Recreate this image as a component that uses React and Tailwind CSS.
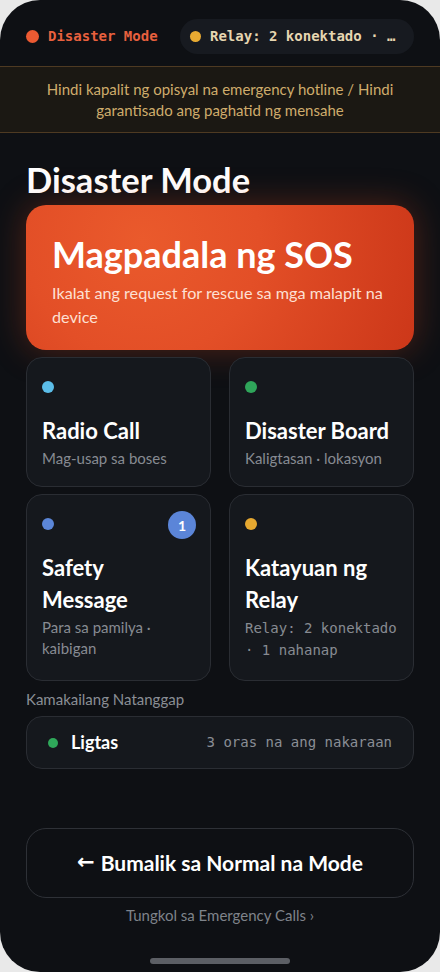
export default function App() {
  const sans = { fontFamily: 'Lato, "Noto Sans", sans-serif' };
  return (
    <div className="w-[440px] h-[972px] bg-[#e9e9e9]">
      <div className="relative w-[440px] h-[972px] bg-[#0e1014] rounded-[40px] overflow-hidden flex flex-col" style={sans}>
        {/* top bar */}
        <div className="h-[66px] flex items-center justify-between pl-[26px] pr-[26px] pt-[6px] shrink-0">
          <div className="flex items-center gap-[9px]">
            <span className="w-[13px] h-[13px] rounded-full bg-[#ec5a32]" />
            <span className="text-[14px] font-bold text-[#e8603e]" style={{ fontFamily: '"DejaVu Sans Mono", monospace' }}>Disaster Mode</span>
          </div>
          <div className="h-[35px] w-[234px] rounded-full bg-[#171a20] flex items-center pl-[10px] gap-[9px]">
            <span className="w-[11px] h-[11px] rounded-full bg-[#e8aa32]" />
            <span className="text-[14px] font-bold text-[#e6d6b0]" style={{ fontFamily: '"DejaVu Sans Mono", monospace' }}>Relay: 2 konektado · …</span>
          </div>
        </div>
        {/* banner */}
        <div className="h-[67px] shrink-0 border-y border-[#4e3a22] bg-[#1b1813] flex items-center justify-center px-6">
          <p className="text-center text-[15px] leading-[21px] text-[#cfac6c]">Hindi kapalit ng opisyal na emergency hotline / Hindi garantisado ang paghatid ng mensahe</p>
        </div>
        <div className="px-[26px] flex flex-col">
          <h1 className="text-[34.5px] font-bold text-white leading-[40px] mt-[27px]">Disaster Mode</h1>
          <div className="mt-[5px] h-[145px] rounded-[20px] bg-[radial-gradient(circle_at_30%_25%,#ea5a2c_0%,#e34f27_40%,#cc3719_100%)] shadow-[0_0_34px_rgba(210,70,30,0.35)] pl-[26px] pr-[20px] pt-[26px]">
            <div className="text-[36px] font-bold text-white leading-[46px]">Magpadala ng SOS</div>
            <div className="text-[16.2px] text-[#fde0d4] leading-[24px] mt-[4px]">Ikalat ang request for rescue sa mga malapit na device</div>
          </div>
          <div className="grid grid-cols-2 gap-x-[18px] gap-y-[7px] mt-[7px]">
            <Card dot="bg-[#5bbde8]" title={<>Radio Call</>} sub="Mag-usap sa boses" h="h-[130px]" />
            <Card dot="bg-[#2fa55a]" title={<>Disaster Board</>} sub="Kaligtasan · lokasyon" h="h-[130px]" />
            <Card dot="bg-[#5b86d8]" badge title={<>Safety<br />Message</>} sub={<>Para sa pamilya ·<br />kaibigan</>} h="h-[187px]" />
            <Card dot="bg-[#e6a830]" title={<>Katayuan ng<br />Relay</>} sub={<>Relay: 2 konektado<br />· 1 nahanap</>} mono h="h-[187px]" />
          </div>
          <div className="text-[15px] text-[#8a8e95] mt-[7px] leading-[22px]">Kamakailang Natanggap</div>
          <div className="mt-[6px] h-[53px] rounded-[16px] bg-[#15181d] border border-[#2a2d33] flex items-center pl-[21px] pr-[21px]">
            <span className="w-[10px] h-[10px] rounded-full bg-[#2fa85a]" />
            <span className="ml-[13px] text-[18px] font-bold text-white">Ligtas</span>
            <span className="ml-auto text-[14px] text-[#8a8e95]" style={{ fontFamily: '"DejaVu Sans Mono", monospace' }}>3 oras na ang nakaraan</span>
          </div>
          <button className="mt-[59px] h-[70px] rounded-[20px] border border-[#2e3137] flex items-center justify-center text-[21px] font-bold text-white gap-[6px]"><span style={{ fontFamily: '"DejaVu Sans", sans-serif' }}>←</span><span>Bumalik sa Normal na Mode</span></button>
          <div className="text-center text-[15px] text-[#7f838a] mt-[7px] leading-[20px]">Tungkol sa Emergency Calls ›</div>
        </div>
        <div className="absolute left-[150px] bottom-[8px] w-[140px] h-[6px] rounded-full bg-[#5c5f65]" />
      </div>
    </div>
  );
}

function Card({ dot, title, sub, badge, mono, h }) {
  return (
    <div className={`${h} rounded-[16px] bg-[#15181d] border border-[#2a2d33] pl-[15px] pr-[12px] pt-[22px] flex flex-col`}>
      <div className="flex items-center justify-between h-[14px]">
        <span className={`w-[12px] h-[12px] rounded-full ${dot}`} />
        {badge && (
          <span className="w-[28px] h-[28px] rounded-full bg-[#5b85d8] text-white text-[14px] font-bold flex items-center justify-center mr-[2px] mt-[2px]">1</span>
        )}
      </div>
      <div className="mt-[21px] text-[22px] font-bold text-white leading-[32px]">{title}</div>
      <div className={`mt-[1px] text-[#878b92] ${mono ? 'text-[14px] leading-[22px]' : 'text-[15px] leading-[21px]'}`} style={mono ? { fontFamily: '"DejaVu Sans Mono", monospace' } : undefined}>{sub}</div>
    </div>
  );
}
